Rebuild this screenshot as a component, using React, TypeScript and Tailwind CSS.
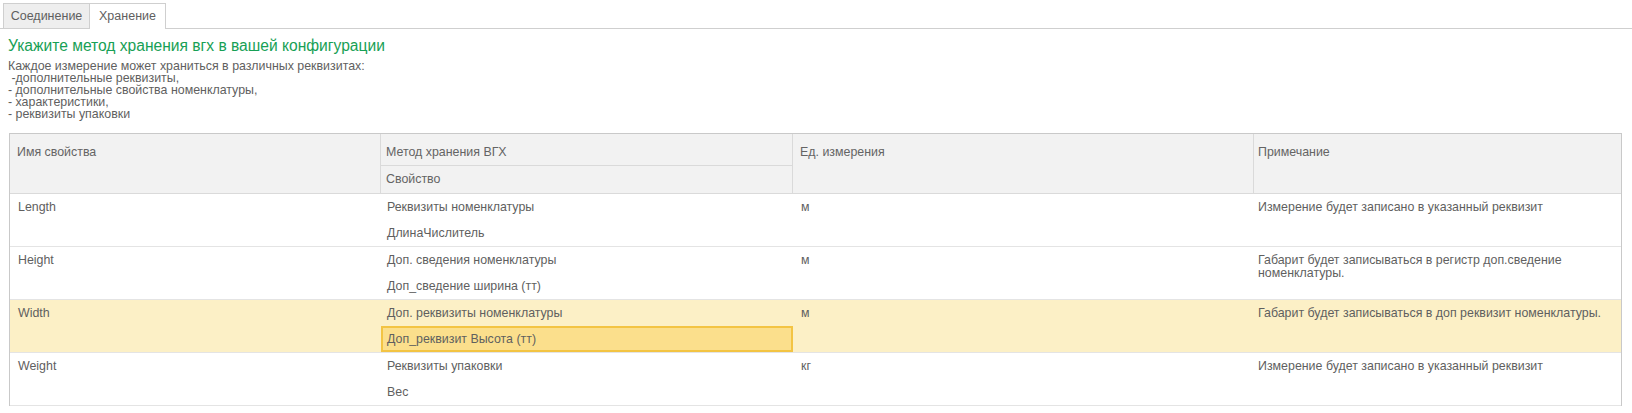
import React from "react";

type Row = {
  name: string;
  method: string;
  prop: string;
  unit: string;
  note: string;
  active?: boolean;
};

const rows: Row[] = [
  {
    name: "Length",
    method: "Реквизиты номенклатуры",
    prop: "ДлинаЧислитель",
    unit: "м",
    note: "Измерение будет записано в указанный реквизит",
  },
  {
    name: "Height",
    method: "Доп. сведения номенклатуры",
    prop: "Доп_сведение ширина (тт)",
    unit: "м",
    note: "Габарит будет записываться в регистр доп.сведение номенклатуры.",
  },
  {
    name: "Width",
    method: "Доп. реквизиты номенклатуры",
    prop: "Доп_реквизит Высота (тт)",
    unit: "м",
    note: "Габарит будет записываться в доп реквизит номенклатуры.",
    active: true,
  },
  {
    name: "Weight",
    method: "Реквизиты упаковки",
    prop: "Вес",
    unit: "кг",
    note: "Измерение будет записано в указанный реквизит",
  },
];

function DataRow({ row }: { row: Row }) {
  return (
    <div
      className={
        row.active
          ? "flex h-[53px] border-b border-[#e4e4e4] bg-[#fcf0c6]"
          : "flex h-[53px] border-b border-[#e4e4e4] bg-white"
      }
    >
      <div className="w-[371px] shrink-0 pl-[8px] leading-[26px]">{row.name}</div>
      <div className="w-[412px] shrink-0 flex flex-col">
        <div className="h-[26px] pl-[6px] leading-[26px]">{row.method}</div>
        {row.active ? (
          <div className="h-[26px] pl-[4px] leading-[22px] bg-[#fbdf8c] border-2 border-[#f3c443]">
            {row.prop}
          </div>
        ) : (
          <div className="h-[26px] pl-[6px] leading-[26px]">{row.prop}</div>
        )}
      </div>
      <div className="w-[461px] shrink-0 pl-[8px] leading-[26px]">{row.unit}</div>
      <div className="flex-1 pl-[4px] pr-[6px] pt-[7px] leading-[13px]">{row.note}</div>
    </div>
  );
}

export default function App() {
  return (
    <div
      className="w-[1632px] h-[413px] overflow-hidden bg-white text-[12.4px] text-[#5f5f5f]"
      style={{ fontFamily: '"Liberation Sans", Arial, sans-serif' }}
    >
      <div className="flex pt-[3px] pl-[3px] border-b border-[#cfcfcf] text-[12.5px]">
        <div className="h-[25px] w-[87px] flex items-center justify-center bg-[#eeeeee] border border-b-0 border-[#cfcfcf]">
          Соединение
        </div>
        <div className="h-[26px] -mb-px w-[76px] flex items-center justify-center bg-white border border-l-0 border-b-0 border-[#cfcfcf]">
          Хранение
        </div>
      </div>

      <div className="pl-[8px]">
        <div className="mt-[7px] text-[15.6px] leading-[19px] text-[#17a055]">
          Укажите метод хранения вгх в вашей конфигурации
        </div>
        <div className="mt-[5px] leading-[12px] text-[12.4px]">
          <div>Каждое измерение может храниться в различных реквизитах:</div>
          <div>&nbsp;-дополнительные реквизиты,</div>
          <div>- дополнительные свойства номенклатуры,</div>
          <div>- характеристики,</div>
          <div>- реквизиты упаковки</div>
        </div>

        <div className="mt-[13px] ml-px w-[1613px] border-t border-l border-r border-[#c9c9c9]">
          <div className="flex h-[60px] bg-[#f2f2f2] border-b border-[#dadada] text-[#646464]">
            <div className="w-[371px] shrink-0 border-r border-[#dadada] pl-[7px] pt-[5px] leading-[27px]">
              Имя свойства
            </div>
            <div className="w-[412px] shrink-0 border-r border-[#dadada] flex flex-col">
              <div className="h-[32px] border-b border-[#dadada] pl-[5px] pt-[5px] leading-[27px]">
                Метод хранения ВГХ
              </div>
              <div className="pl-[5px] leading-[27px]">Свойство</div>
            </div>
            <div className="w-[461px] shrink-0 border-r border-[#dadada] pl-[7px] pt-[5px] leading-[27px]">
              Ед. измерения
            </div>
            <div className="flex-1 pl-[4px] pt-[5px] leading-[27px]">Примечание</div>
          </div>
          {rows.map((r) => (
            <DataRow key={r.name} row={r} />
          ))}
        </div>
      </div>
    </div>
  );
}
